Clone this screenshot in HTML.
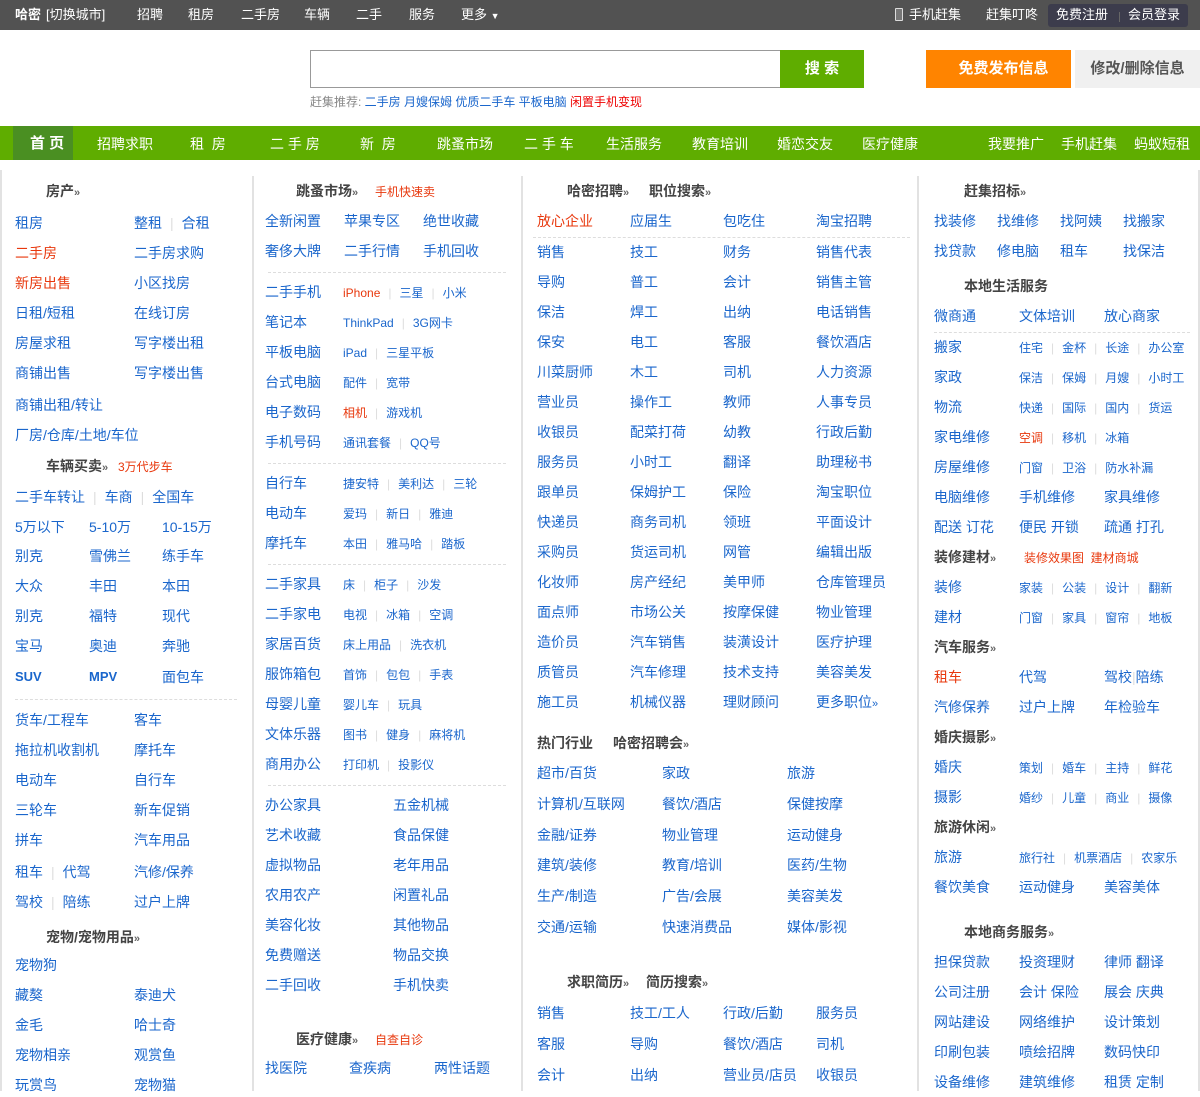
<!DOCTYPE html>
<html><head><meta charset="utf-8"><style>
*{margin:0;padding:0;box-sizing:border-box}
body{width:1200px;height:1091px;overflow:hidden;background:#fff;font-family:"Liberation Sans","Noto Sans CJK SC",sans-serif;position:relative;color:#1a66cc}
.p{position:absolute;white-space:nowrap}
.t{font-size:13px;color:#fff;top:7px;line-height:16px}
.a{position:absolute;white-space:nowrap;font-size:14px;line-height:18px;color:#1a66cc}
.s{position:absolute;white-space:nowrap;font-size:12px;line-height:16px;color:#1a66cc}
.r{color:#e8380d}
.h{position:absolute;white-space:nowrap;font-size:14px;line-height:18px;color:#444;font-weight:bold}
.h small{font-size:11px;color:#666}
b.x{font-weight:normal;color:#ddd;margin:0 8px}
.dl{position:absolute;height:0;border-top:1px dashed #ddd}
.vl{position:absolute;width:2px;background:#e2e2e2}
.n{position:absolute;top:135px;font-size:14px;color:#fff;line-height:18px;white-space:nowrap}
</style></head><body>
<div class="p" style="left:0;top:0;width:1200px;height:30px;background:#525252"></div>
<div class="p t" style="left:15px;font-weight:bold">哈密</div>
<div class="p t" style="left:46px">[切换城市]</div>
<div class="p t" style="left:137px">招聘</div>
<div class="p t" style="left:188px">租房</div>
<div class="p t" style="left:241px">二手房</div>
<div class="p t" style="left:304px">车辆</div>
<div class="p t" style="left:356px">二手</div>
<div class="p t" style="left:409px">服务</div>
<div class="p t" style="left:461px">更多 <span style="font-size:9px">▼</span></div>
<div class="p" style="left:895px;top:8px;width:8px;height:13px;border:1.5px solid #ddd;border-radius:1px;background:#777"></div>
<div class="p t" style="left:909px">手机赶集</div>
<div class="p t" style="left:986px">赶集叮咚</div>
<div class="p" style="left:1048px;top:4px;width:140px;height:23px;background:#3c3c4c;border-radius:3px"></div>
<div class="p t" style="left:1056px">免费注册</div>
<div class="p" style="left:1119px;top:12px;width:1px;height:10px;background:#666"></div>
<div class="p t" style="left:1128px">会员登录</div>

<div class="p" style="left:310px;top:50px;width:470px;height:38px;border:1px solid #999;border-right:none"></div>
<div class="p" style="left:780px;top:50px;width:84px;height:38px;background:#5fad00;color:#fff;font-weight:bold;font-size:15px;line-height:38px;text-align:center">搜 索</div>
<div class="p" style="left:310px;top:94px;font-size:12px;line-height:16px;color:#888">赶集推荐: <span style="color:#1a66cc">二手房 月嫂保姆 优质二手车 平板电脑</span> <span style="color:#e00">闲置手机变现</span></div>
<div class="p" style="left:926px;top:50px;width:145px;height:38px;background:#ff8400;color:#fff;font-weight:bold;font-size:15px;line-height:38px;text-align:center;padding-left:10px">免费发布信息</div>
<div class="p" style="left:1075px;top:50px;width:125px;height:38px;background:#f0f0f0;color:#555;font-weight:bold;font-size:15px;line-height:38px;text-align:center">修改/删除信息</div>

<div class="p" style="left:0;top:126px;width:1200px;height:34px;background:#5fad00"></div>
<div class="p" style="left:13px;top:126px;width:60px;height:34px;background:#4a8f22"></div>
<div class="n" style="left:30px;font-weight:bold;font-size:15px">首 页</div>
<div class="n" style="left:97px">招聘求职</div>
<div class="n" style="left:190px">租 &nbsp;房</div>
<div class="n" style="left:270px">二 手 房</div>
<div class="n" style="left:360px">新 &nbsp;房</div>
<div class="n" style="left:437px">跳蚤市场</div>
<div class="n" style="left:524px">二 手 车</div>
<div class="n" style="left:606px">生活服务</div>
<div class="n" style="left:692px">教育培训</div>
<div class="n" style="left:777px">婚恋交友</div>
<div class="n" style="left:862px">医疗健康</div>
<div class="n" style="left:988px">我要推广</div>
<div class="n" style="left:1061px">手机赶集</div>
<div class="n" style="left:1134px">蚂蚁短租</div>

<div class="vl" style="left:0;top:170px;height:921px"></div>
<div class="vl" style="left:1198px;top:170px;height:921px"></div>
<div class="vl" style="left:252px;top:176px;height:915px"></div>
<div class="vl" style="left:521px;top:176px;height:915px"></div>
<div class="vl" style="left:917px;top:176px;height:915px"></div>

<!-- col1 -->
<div class="h" style="left:46px;top:182px">房产<small>»</small></div>
<div class="a" style="left:15px;top:214px">租房</div><div class="a" style="left:134px;top:214px">整租<b class="x">|</b>合租</div>
<div class="a r" style="left:15px;top:244px">二手房</div><div class="a" style="left:134px;top:244px">二手房求购</div>
<div class="a r" style="left:15px;top:274px">新房出售</div><div class="a" style="left:134px;top:274px">小区找房</div>
<div class="a" style="left:15px;top:304px">日租/短租</div><div class="a" style="left:134px;top:304px">在线订房</div>
<div class="a" style="left:15px;top:334px">房屋求租</div><div class="a" style="left:134px;top:334px">写字楼出租</div>
<div class="a" style="left:15px;top:364px">商铺出售</div><div class="a" style="left:134px;top:364px">写字楼出售</div>
<div class="a" style="left:15px;top:396px">商铺出租/转让</div>
<div class="a" style="left:15px;top:426px">厂房/仓库/土地/车位</div>
<div class="h" style="left:46px;top:457px">车辆买卖<small>»</small></div><div class="s r" style="left:118px;top:459px">3万代步车</div>
<div class="a" style="left:15px;top:488px">二手车转让<b class="x">|</b>车商<b class="x">|</b>全国车</div>
<div class="a" style="left:15px;top:518px">5万以下</div><div class="a" style="left:89px;top:518px">5-10万</div><div class="a" style="left:162px;top:518px">10-15万</div>
<div class="a" style="left:15px;top:547px">别克</div><div class="a" style="left:89px;top:547px">雪佛兰</div><div class="a" style="left:162px;top:547px">练手车</div>
<div class="a" style="left:15px;top:577px">大众</div><div class="a" style="left:89px;top:577px">丰田</div><div class="a" style="left:162px;top:577px">本田</div>
<div class="a" style="left:15px;top:607px">别克</div><div class="a" style="left:89px;top:607px">福特</div><div class="a" style="left:162px;top:607px">现代</div>
<div class="a" style="left:15px;top:637px">宝马</div><div class="a" style="left:89px;top:637px">奥迪</div><div class="a" style="left:162px;top:637px">奔驰</div>
<div class="a" style="left:15px;top:668px;font-weight:bold;font-size:13px">SUV</div><div class="a" style="left:89px;top:668px;font-weight:bold;font-size:13px">MPV</div><div class="a" style="left:162px;top:668px">面包车</div>
<div class="dl" style="left:15px;top:699px;width:222px"></div>
<div class="a" style="left:15px;top:711px">货车/工程车</div><div class="a" style="left:134px;top:711px">客车</div>
<div class="a" style="left:15px;top:741px">拖拉机收割机</div><div class="a" style="left:134px;top:741px">摩托车</div>
<div class="a" style="left:15px;top:771px">电动车</div><div class="a" style="left:134px;top:771px">自行车</div>
<div class="a" style="left:15px;top:801px">三轮车</div><div class="a" style="left:134px;top:801px">新车促销</div>
<div class="a" style="left:15px;top:831px">拼车</div><div class="a" style="left:134px;top:831px">汽车用品</div>
<div class="a" style="left:15px;top:863px">租车<b class="x">|</b>代驾</div><div class="a" style="left:134px;top:863px">汽修/保养</div>
<div class="a" style="left:15px;top:893px">驾校<b class="x">|</b>陪练</div><div class="a" style="left:134px;top:893px">过户上牌</div>
<div class="h" style="left:46px;top:928px">宠物/宠物用品<small>»</small></div>
<div class="a" style="left:15px;top:956px">宠物狗</div>
<div class="a" style="left:15px;top:986px">藏獒</div><div class="a" style="left:134px;top:986px">泰迪犬</div>
<div class="a" style="left:15px;top:1016px">金毛</div><div class="a" style="left:134px;top:1016px">哈士奇</div>
<div class="a" style="left:15px;top:1046px">宠物相亲</div><div class="a" style="left:134px;top:1046px">观赏鱼</div>
<div class="a" style="left:15px;top:1076px">玩赏鸟</div><div class="a" style="left:134px;top:1076px">宠物猫</div>

<!-- col2 -->
<div class="h" style="left:296px;top:182px">跳蚤市场<small>»</small></div><div class="s r" style="left:375px;top:184px">手机快速卖</div>
<div class="a" style="left:265px;top:212px">全新闲置</div><div class="a" style="left:344px;top:212px">苹果专区</div><div class="a" style="left:423px;top:212px">绝世收藏</div>
<div class="a" style="left:265px;top:242px">奢侈大牌</div><div class="a" style="left:344px;top:242px">二手行情</div><div class="a" style="left:423px;top:242px">手机回收</div>
<div class="dl" style="left:268px;top:272px;width:238px"></div>
<div class="a" style="left:265px;top:283px">二手手机</div><div class="s" style="left:343px;top:285px"><span class="r">iPhone</span><b class="x">|</b>三星<b class="x">|</b>小米</div>
<div class="a" style="left:265px;top:313px">笔记本</div><div class="s" style="left:343px;top:315px">ThinkPad<b class="x">|</b>3G网卡</div>
<div class="a" style="left:265px;top:343px">平板电脑</div><div class="s" style="left:343px;top:345px">iPad<b class="x">|</b>三星平板</div>
<div class="a" style="left:265px;top:373px">台式电脑</div><div class="s" style="left:343px;top:375px">配件<b class="x">|</b>宽带</div>
<div class="a" style="left:265px;top:403px">电子数码</div><div class="s" style="left:343px;top:405px"><span class="r">相机</span><b class="x">|</b>游戏机</div>
<div class="a" style="left:265px;top:433px">手机号码</div><div class="s" style="left:343px;top:435px">通讯套餐<b class="x">|</b>QQ号</div>
<div class="dl" style="left:268px;top:463px;width:238px"></div>
<div class="a" style="left:265px;top:474px">自行车</div><div class="s" style="left:343px;top:476px">捷安特<b class="x">|</b>美利达<b class="x">|</b>三轮</div>
<div class="a" style="left:265px;top:504px">电动车</div><div class="s" style="left:343px;top:506px">爱玛<b class="x">|</b>新日<b class="x">|</b>雅迪</div>
<div class="a" style="left:265px;top:534px">摩托车</div><div class="s" style="left:343px;top:536px">本田<b class="x">|</b>雅马哈<b class="x">|</b>踏板</div>
<div class="dl" style="left:268px;top:564px;width:238px"></div>
<div class="a" style="left:265px;top:575px">二手家具</div><div class="s" style="left:343px;top:577px">床<b class="x">|</b>柜子<b class="x">|</b>沙发</div>
<div class="a" style="left:265px;top:605px">二手家电</div><div class="s" style="left:343px;top:607px">电视<b class="x">|</b>冰箱<b class="x">|</b>空调</div>
<div class="a" style="left:265px;top:635px">家居百货</div><div class="s" style="left:343px;top:637px">床上用品<b class="x">|</b>洗衣机</div>
<div class="a" style="left:265px;top:665px">服饰箱包</div><div class="s" style="left:343px;top:667px">首饰<b class="x">|</b>包包<b class="x">|</b>手表</div>
<div class="a" style="left:265px;top:695px">母婴儿童</div><div class="s" style="left:343px;top:697px">婴儿车<b class="x">|</b>玩具</div>
<div class="a" style="left:265px;top:725px">文体乐器</div><div class="s" style="left:343px;top:727px">图书<b class="x">|</b>健身<b class="x">|</b>麻将机</div>
<div class="a" style="left:265px;top:755px">商用办公</div><div class="s" style="left:343px;top:757px">打印机<b class="x">|</b>投影仪</div>
<div class="dl" style="left:268px;top:785px;width:238px"></div>
<div class="a" style="left:265px;top:796px">办公家具</div><div class="a" style="left:393px;top:796px">五金机械</div>
<div class="a" style="left:265px;top:826px">艺术收藏</div><div class="a" style="left:393px;top:826px">食品保健</div>
<div class="a" style="left:265px;top:856px">虚拟物品</div><div class="a" style="left:393px;top:856px">老年用品</div>
<div class="a" style="left:265px;top:886px">农用农产</div><div class="a" style="left:393px;top:886px">闲置礼品</div>
<div class="a" style="left:265px;top:916px">美容化妆</div><div class="a" style="left:393px;top:916px">其他物品</div>
<div class="a" style="left:265px;top:946px">免费赠送</div><div class="a" style="left:393px;top:946px">物品交换</div>
<div class="a" style="left:265px;top:976px">二手回收</div><div class="a" style="left:393px;top:976px">手机快卖</div>
<div class="h" style="left:296px;top:1030px">医疗健康<small>»</small></div><div class="s r" style="left:375px;top:1032px">自查自诊</div>
<div class="a" style="left:265px;top:1059px">找医院</div><div class="a" style="left:349px;top:1059px">查疾病</div><div class="a" style="left:434px;top:1059px">两性话题</div>

<!-- col3 -->
<div class="h" style="left:567px;top:182px">哈密招聘<small>»</small></div><div class="h" style="left:649px;top:182px">职位搜索<small>»</small></div>
<div class="a r" style="left:537px;top:212px">放心企业</div><div class="a" style="left:630px;top:212px">应届生</div><div class="a" style="left:723px;top:212px">包吃住</div><div class="a" style="left:816px;top:212px">淘宝招聘</div>
<div class="dl" style="left:533px;top:237px;width:377px"></div>
<div class="a" style="left:537px;top:237px;line-height:30px">销售<br>导购<br>保洁<br>保安<br>川菜厨师<br>营业员<br>收银员<br>服务员<br>跟单员<br>快递员<br>采购员<br>化妆师<br>面点师<br>造价员<br>质管员<br>施工员</div>
<div class="a" style="left:630px;top:237px;line-height:30px">技工<br>普工<br>焊工<br>电工<br>木工<br>操作工<br>配菜打荷<br>小时工<br>保姆护工<br>商务司机<br>货运司机<br>房产经纪<br>市场公关<br>汽车销售<br>汽车修理<br>机械仪器</div>
<div class="a" style="left:723px;top:237px;line-height:30px">财务<br>会计<br>出纳<br>客服<br>司机<br>教师<br>幼教<br>翻译<br>保险<br>领班<br>网管<br>美甲师<br>按摩保健<br>装潢设计<br>技术支持<br>理财顾问</div>
<div class="a" style="left:816px;top:237px;line-height:30px">销售代表<br>销售主管<br>电话销售<br>餐饮酒店<br>人力资源<br>人事专员<br>行政后勤<br>助理秘书<br>淘宝职位<br>平面设计<br>编辑出版<br>仓库管理员<br>物业管理<br>医疗护理<br>美容美发<br>更多职位<span style="font-size:11px">»</span></div>
<div class="h" style="left:537px;top:734px">热门行业</div><div class="h" style="left:613px;top:734px">哈密招聘会<small>»</small></div>
<div class="a" style="left:537px;top:758px;line-height:30.8px">超市/百货<br>计算机/互联网<br>金融/证券<br>建筑/装修<br>生产/制造<br>交通/运输</div>
<div class="a" style="left:662px;top:758px;line-height:30.8px">家政<br>餐饮/酒店<br>物业管理<br>教育/培训<br>广告/会展<br>快速消费品</div>
<div class="a" style="left:787px;top:758px;line-height:30.8px">旅游<br>保健按摩<br>运动健身<br>医药/生物<br>美容美发<br>媒体/影视</div>
<div class="h" style="left:567px;top:973px">求职简历<small>»</small></div><div class="h" style="left:646px;top:973px">简历搜索<small>»</small></div>
<div class="a" style="left:537px;top:998px;line-height:31px">销售<br>客服<br>会计</div>
<div class="a" style="left:630px;top:998px;line-height:31px">技工/工人<br>导购<br>出纳</div>
<div class="a" style="left:723px;top:998px;line-height:31px">行政/后勤<br>餐饮/酒店<br>营业员/店员</div>
<div class="a" style="left:816px;top:998px;line-height:31px">服务员<br>司机<br>收银员</div>

<!-- col4 -->
<div class="h" style="left:964px;top:182px">赶集招标<small>»</small></div>
<div class="a" style="left:934px;top:212px">找装修</div><div class="a" style="left:997px;top:212px">找维修</div><div class="a" style="left:1060px;top:212px">找阿姨</div><div class="a" style="left:1123px;top:212px">找搬家</div>
<div class="a" style="left:934px;top:242px">找贷款</div><div class="a" style="left:997px;top:242px">修电脑</div><div class="a" style="left:1060px;top:242px">租车</div><div class="a" style="left:1123px;top:242px">找保洁</div>
<div class="h" style="left:964px;top:277px">本地生活服务</div>
<div class="a" style="left:934px;top:307px">微商通</div><div class="a" style="left:1019px;top:307px">文体培训</div><div class="a" style="left:1104px;top:307px">放心商家</div>
<div class="dl" style="left:934px;top:332px;width:256px"></div>
<div class="a" style="left:934px;top:338px">搬家</div><div class="s" style="left:1019px;top:340px">住宅<b class="x">|</b>金杯<b class="x">|</b>长途<b class="x">|</b>办公室</div>
<div class="a" style="left:934px;top:368px">家政</div><div class="s" style="left:1019px;top:370px">保洁<b class="x">|</b>保姆<b class="x">|</b>月嫂<b class="x">|</b>小时工</div>
<div class="a" style="left:934px;top:398px">物流</div><div class="s" style="left:1019px;top:400px">快递<b class="x">|</b>国际<b class="x">|</b>国内<b class="x">|</b>货运</div>
<div class="a" style="left:934px;top:428px">家电维修</div><div class="s" style="left:1019px;top:430px"><span class="r">空调</span><b class="x">|</b>移机<b class="x">|</b>冰箱</div>
<div class="a" style="left:934px;top:458px">房屋维修</div><div class="s" style="left:1019px;top:460px">门窗<b class="x">|</b>卫浴<b class="x">|</b>防水补漏</div>
<div class="a" style="left:934px;top:488px">电脑维修</div><div class="a" style="left:1019px;top:488px">手机维修</div><div class="a" style="left:1104px;top:488px">家具维修</div>
<div class="a" style="left:934px;top:518px">配送 订花</div><div class="a" style="left:1019px;top:518px">便民 开锁</div><div class="a" style="left:1104px;top:518px">疏通 打孔</div>
<div class="h" style="left:934px;top:548px">装修建材<small>»</small></div><div class="s r" style="left:1024px;top:550px">装修效果图 &nbsp;建材商城</div>
<div class="a" style="left:934px;top:578px">装修</div><div class="s" style="left:1019px;top:580px">家装<b class="x">|</b>公装<b class="x">|</b>设计<b class="x">|</b>翻新</div>
<div class="a" style="left:934px;top:608px">建材</div><div class="s" style="left:1019px;top:610px">门窗<b class="x">|</b>家具<b class="x">|</b>窗帘<b class="x">|</b>地板</div>
<div class="h" style="left:934px;top:638px">汽车服务<small>»</small></div>
<div class="a r" style="left:934px;top:668px">租车</div><div class="a" style="left:1019px;top:668px">代驾</div><div class="a" style="left:1104px;top:668px">驾校<span style="color:#ddd">|</span>陪练</div>
<div class="a" style="left:934px;top:698px">汽修保养</div><div class="a" style="left:1019px;top:698px">过户上牌</div><div class="a" style="left:1104px;top:698px">年检验车</div>
<div class="h" style="left:934px;top:728px">婚庆摄影<small>»</small></div>
<div class="a" style="left:934px;top:758px">婚庆</div><div class="s" style="left:1019px;top:760px">策划<b class="x">|</b>婚车<b class="x">|</b>主持<b class="x">|</b>鲜花</div>
<div class="a" style="left:934px;top:788px">摄影</div><div class="s" style="left:1019px;top:790px">婚纱<b class="x">|</b>儿童<b class="x">|</b>商业<b class="x">|</b>摄像</div>
<div class="h" style="left:934px;top:818px">旅游休闲<small>»</small></div>
<div class="a" style="left:934px;top:848px">旅游</div><div class="s" style="left:1019px;top:850px">旅行社<b class="x">|</b>机票酒店<b class="x">|</b>农家乐</div>
<div class="a" style="left:934px;top:878px">餐饮美食</div><div class="a" style="left:1019px;top:878px">运动健身</div><div class="a" style="left:1104px;top:878px">美容美体</div>
<div class="h" style="left:964px;top:923px">本地商务服务<small>»</small></div>
<div class="a" style="left:934px;top:947px;line-height:30px">担保贷款<br>公司注册<br>网站建设<br>印刷包装<br>设备维修</div>
<div class="a" style="left:1019px;top:947px;line-height:30px">投资理财<br>会计 保险<br>网络维护<br>喷绘招牌<br>建筑维修</div>
<div class="a" style="left:1104px;top:947px;line-height:30px">律师 翻译<br>展会 庆典<br>设计策划<br>数码快印<br>租赁 定制</div>
</body></html>
